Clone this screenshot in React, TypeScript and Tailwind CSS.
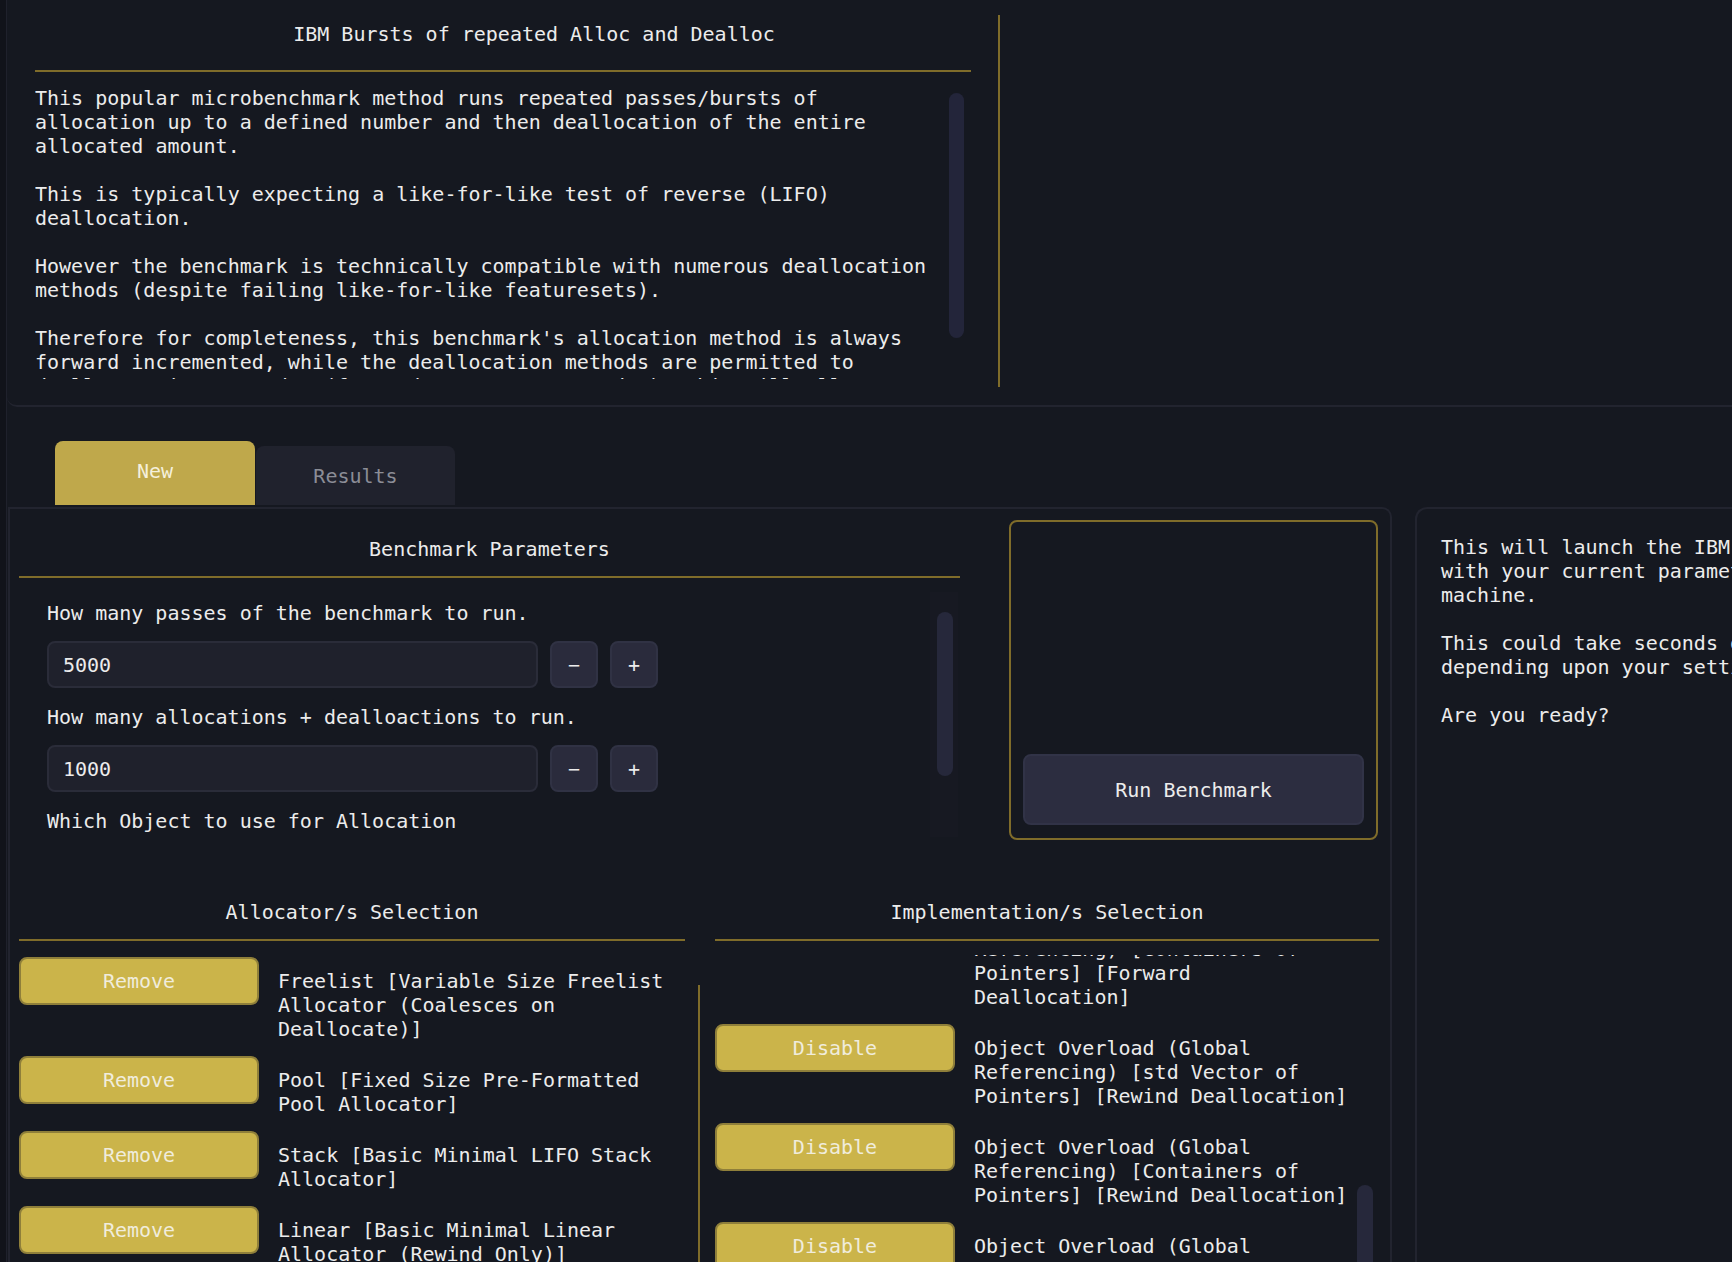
import React from "react";

const gold = "bg-[#7f6c2a]";

function GoldButton({ label }: { label: string }) {
  return (
    <button className="h-[48px] w-[240px] shrink-0 rounded-[8px] border-2 border-[#8f7f3a] bg-[#cbb44a] text-[#f0ecdc]">
      {label}
    </button>
  );
}

function Row({ btn, text, width }: { btn: string; text: string; width: string }) {
  return (
    <div className="flex items-start gap-[19px]">
      <GoldButton label={btn} />
      <div className={`pt-[12px] ${width}`}>{text}</div>
    </div>
  );
}

function NumberField({ value }: { value: string }) {
  return (
    <div className="flex items-center gap-[12px]">
      <div className="flex h-[47px] w-[491px] items-center rounded-[8px] border-2 border-[#2a2c39] bg-[#1f212c] pl-[14px]">
        {value}
      </div>
      <button className="h-[47px] w-[48px] rounded-[8px] border-2 border-[#303244] bg-[#2a2b3c]">−</button>
      <button className="h-[47px] w-[48px] rounded-[8px] border-2 border-[#303244] bg-[#2a2b3c]">+</button>
    </div>
  );
}

const allocators = [
  "Freelist [Variable Size Freelist Allocator (Coalesces on Deallocate)]",
  "Pool [Fixed Size Pre-Formatted Pool Allocator]",
  "Stack [Basic Minimal LIFO Stack Allocator]",
  "Linear [Basic Minimal Linear Allocator (Rewind Only)]",
];

const implementations = [
  "Object Overload (Global Referencing) [Containers of Pointers] [Forward Deallocation]",
  "Object Overload (Global Referencing) [std Vector of Pointers] [Rewind Deallocation]",
  "Object Overload (Global Referencing) [Containers of Pointers] [Rewind Deallocation]",
  "Object Overload (Global Referencing) [std Vector of Pointers] [Random Deallocation]",
];

const intro = `This popular microbenchmark method runs repeated passes/bursts of allocation up to a defined number and then deallocation of the entire allocated amount.

This is typically expecting a like-for-like test of reverse (LIFO) deallocation.

However the benchmark is technically compatible with numerous deallocation methods (despite failing like-for-like featuresets).

Therefore for completeness, this benchmark's allocation method is always forward incremented, while the deallocation methods are permitted to deallocate in any order (forward, reverse or random). This will allow`;

export default function App() {
  return (
    <div
      className="h-[1262px] w-[1732px] overflow-hidden bg-[#11131a] pl-[6px] text-[20px] leading-[24px] text-[#ececec]"
      style={{ fontFamily: '"DejaVu Sans Mono", "Liberation Mono", monospace' }}
    >
      <div className="h-full border-l border-[#1f212c] bg-[#151820]">
        {/* description panel */}
        <div className="flex h-[407px] rounded-bl-[10px] border-b-2 border-[#22242f]">
          <div className="ml-[28px] w-[936px]">
            <div className="pt-[22px] pl-[62px] text-center">IBM Bursts of repeated Alloc and Dealloc</div>
            <div className={`mt-[24px] h-[2px] ${gold}`} />
            <div className="mt-[12px] flex h-[295px] overflow-hidden">
              <div className="w-[906px] whitespace-pre-line pt-[2px]">{intro}</div>
              <div className="ml-[8px] mt-[9px] h-[245px] w-[15px] rounded-full bg-[#23253a]" />
            </div>
          </div>
          <div className={`ml-[27px] mt-[15px] h-[372px] w-[2px] ${gold}`} />
        </div>

        {/* tabs */}
        <div className="flex h-[100px] items-end pb-[2px] pl-[48px]">
          <div className="flex h-[64px] w-[200px] items-center justify-center rounded-t-[8px] bg-[#bfa84b] pb-[4px] text-[#f5f0dc]">
            New
          </div>
          <div className="ml-[1px] flex h-[59px] w-[199px] items-center justify-center rounded-t-[8px] bg-[#20222d] text-[#8b8d96]">
            Results
          </div>
        </div>

        <div className="flex">
          {/* main panel */}
          <div className="ml-[1px] h-[760px] w-[1384px] shrink-0 rounded-tr-[10px] border-x-2 border-t-2 border-[#22242f] pl-[9px]">
            <div className="flex">
              <div className="w-[941px] pt-[28px]">
                <div className="text-center">Benchmark Parameters</div>
                <div className={`mt-[15px] h-[2px] ${gold}`} />
                <div className="mt-[14px] flex">
                  <div className="flex-1 pl-[28px] pt-[9px]">
                    <div>How many passes of the benchmark to run.</div>
                    <div className="mt-[16px]">
                      <NumberField value="5000" />
                    </div>
                    <div className="mt-[17px]">How many allocations + dealloactions to run.</div>
                    <div className="mt-[16px]">
                      <NumberField value="1000" />
                    </div>
                    <div className="mt-[17px]">Which Object to use for Allocation</div>
                  </div>
                  <div className="mr-[2px] h-[245px] w-[28px] bg-[#171922] pl-[7px] pt-[20px]">
                    <div className="h-[164px] w-[16px] rounded-full bg-[#26283b]" />
                  </div>
                </div>
              </div>

              <div className="ml-[49px] mt-[11px] flex h-[320px] w-[369px] flex-col justify-end rounded-[8px] border-2 border-[#7f6c2a] px-[12px] pb-[13px]">
                <button className="h-[71px] w-full rounded-[8px] border-2 border-[#313347] bg-[#2c2d40] text-[#ececec]">
                  Run Benchmark
                </button>
              </div>
            </div>

            {/* selections */}
            <div className="mt-[60px] flex">
              <div className="w-[666px] shrink-0">
                <div className="text-center">Allocator/s Selection</div>
                <div className={`mt-[15px] h-[2px] ${gold}`} />
                <div className="mt-[16px] flex flex-col gap-[15px]">
                  {allocators.map((a) => (
                    <Row key={a} btn="Remove" text={a} width="w-[406px]" />
                  ))}
                </div>
              </div>

              <div className={`ml-[13px] mt-[85px] h-[300px] w-[2px] ${gold}`} />

              <div className="ml-[15px] w-[664px] shrink-0">
                <div className="text-center">Implementation/s Selection</div>
                <div className={`mt-[15px] h-[2px] ${gold}`} />
                <div className="mt-[14px] flex h-[310px] overflow-hidden">
                  <div className="w-[642px]">
                    <div className="-mt-[54px] flex flex-col gap-[15px]">
                      {implementations.map((t, i) => (
                        <Row key={i} btn="Disable" text={t} width="w-[380px]" />
                      ))}
                    </div>
                  </div>
                  <div className="mt-[230px] h-[200px] w-[16px] rounded-full bg-[#26283b]" />
                </div>
              </div>
            </div>
          </div>

          {/* right info panel */}
          <div className="ml-[23px] h-[760px] w-[420px] shrink-0 rounded-tl-[12px] border-l-2 border-t-2 border-[#22242f] pl-[24px] pt-[26px]">
            <div className="whitespace-pre">
              {`This will launch the IBM Bursts benchmark
with your current parameters on your
machine.

This could take seconds or minutes
depending upon your settings.

Are you ready?`}
            </div>
          </div>
        </div>
      </div>
    </div>
  );
}
